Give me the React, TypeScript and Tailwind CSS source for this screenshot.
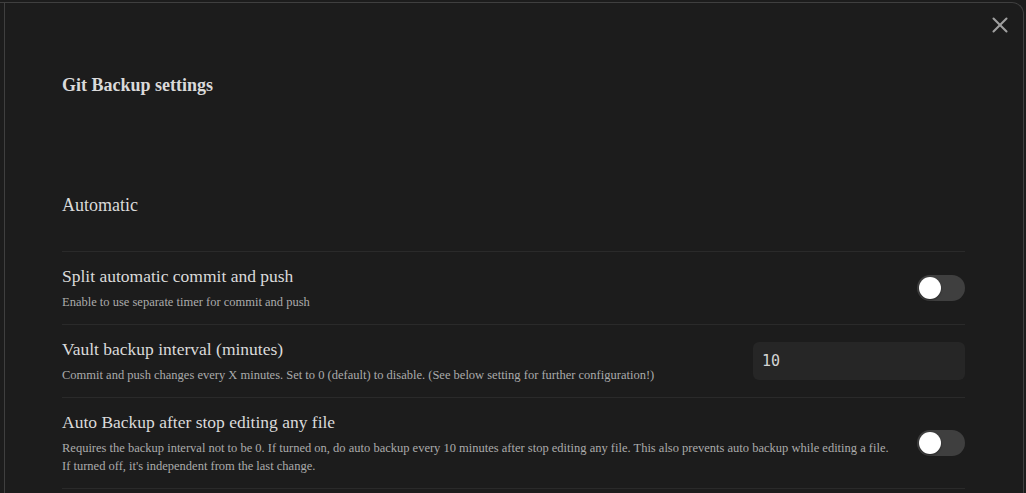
import React from "react";

const serif = { fontFamily: '"Liberation Serif", "Times New Roman", serif' };

function Toggle() {
  return (
    <div className="relative h-[26px] w-[48px] shrink-0 rounded-full bg-[#3f3f3f]">
      <div className="absolute left-[2px] top-[2px] h-[22px] w-[22px] rounded-full bg-white shadow-[0_1px_2px_rgba(0,0,0,0.4)]" />
    </div>
  );
}

function Row({
  title,
  desc,
  control,
}: {
  title: string;
  desc: React.ReactNode;
  control: React.ReactNode;
}) {
  return (
    <div className="flex items-center border-t border-[#2a2a2a] pt-[12px] pb-[13px]">
      <div className="min-w-0 flex-1">
        <div className="text-[17.5px] leading-[24px] text-[#dadada]">{title}</div>
        <div className="mt-[5px] text-[12.5px] leading-[18px] text-[#ababab]">{desc}</div>
      </div>
      <div className="ml-[12px] flex shrink-0 justify-end">{control}</div>
    </div>
  );
}

export default function App() {
  return (
    <div className="h-[493px] w-full overflow-hidden bg-[#1c1c1c] pt-[2px]" style={serif}>
      <div className="relative mr-[2px] h-[491px] rounded-tr-[12px] border-t border-r border-[#3f3f3f]">
        <button className="absolute right-[10px] top-[9px] flex h-[26px] w-[26px] items-center justify-center text-[#a0a0a0]">
          <svg width="26" height="26" viewBox="0 0 24 24" fill="none" stroke="currentColor" strokeWidth="1.9" strokeLinecap="round">
            <path d="M18 6 6 18" />
            <path d="m6 6 12 12" />
          </svg>
        </button>
        <div className="ml-[4px] h-full border-l border-[#3f3f3f] pl-[57px] pr-[58px]">
          <div className="pt-[69px] text-[18px] font-bold leading-[27px] text-[#dadada]">Git Backup settings</div>
          <div className="mt-[93px] text-[18px] leading-[27px] text-[#dadada]">Automatic</div>
          <div className="mt-[32px]">
            <Row
              title="Split automatic commit and push"
              desc="Enable to use separate timer for commit and push"
              control={<Toggle />}
            />
            <Row
              title="Vault backup interval (minutes)"
              desc="Commit and push changes every X minutes. Set to 0 (default) to disable. (See below setting for further configuration!)"
              control={
                <input
                  type="text"
                  defaultValue="10"
                  className="h-[38px] w-[212px] rounded-[6px] bg-[#262626] px-[9px] text-[15px] text-[#d4d4d4] outline-none"
                  style={{ fontFamily: '"DejaVu Sans Mono", monospace' }}
                />
              }
            />
            <Row
              title="Auto Backup after stop editing any file"
              desc={
                <>
                  Requires the backup interval not to be 0. If turned on, do auto backup every 10 minutes after stop editing any file. This also prevents auto backup while editing a file.
                  <br />
                  If turned off, it's independent from the last change.
                </>
              }
              control={<Toggle />}
            />
            <div className="border-t border-[#2a2a2a]" />
          </div>
        </div>
      </div>
    </div>
  );
}
